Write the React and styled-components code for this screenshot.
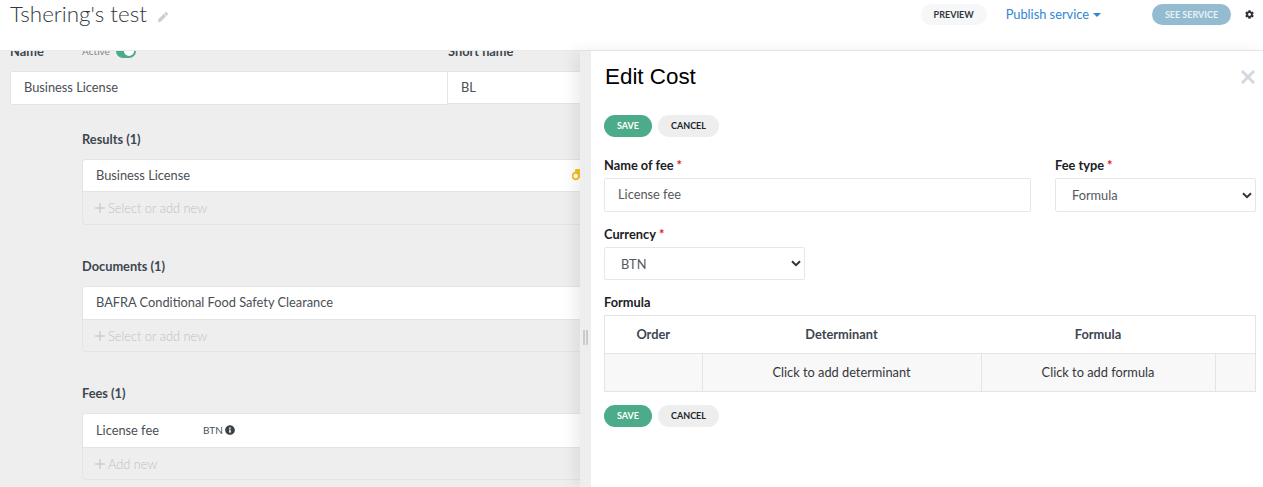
import React from "react";
import styled, { createGlobalStyle } from "styled-components";
import { FaCog, FaInfoCircle, FaPen } from "react-icons/fa";

const chevron =
  "url(\"data:image/svg+xml,%3Csvg xmlns='http://www.w3.org/2000/svg' width='10' height='7' viewBox='0 0 10 7'%3E%3Cpath d='M1 1.2 5 5.2l4-4' fill='none' stroke='%23333' stroke-width='2'/%3E%3C/svg%3E\")";

const GlobalStyle = createGlobalStyle`
  html, body {
    margin: 0;
    height: 100%;
    overflow: hidden;
  }
  body {
    font-family: "Lato", "Liberation Sans", sans-serif;
    background: #eeeeee;
    color: #3d4650;
  }
  * {
    box-sizing: border-box;
  }
`;

const Page = styled.div`
  position: relative;
  width: 1263px;
  height: 487px;
  overflow: hidden;
`;

const Header = styled.header`
  height: 51px;
  background: #fff;
  border-bottom: 1px solid #e9e9e9;
  display: flex;
  align-items: flex-start;
  padding: 4px 0 0 10px;
`;

const Title = styled.h1`
  margin: -5px 0 0;
  font-size: 22.4px;
  line-height: 30px;
  font-weight: 300;
  color: #32383f;
`;

const EditIcon = styled(FaPen)`
  color: #cfcfcf;
  font-size: 10px;
  margin: 8px 0 0 11px;
`;

const HeaderActions = styled.div`
  margin-left: auto;
  display: flex;
  align-items: center;
  height: 21px;
  padding-right: 9px;
`;

const Pill = styled.button`
  height: 21px;
  border: 0;
  border-radius: 11px;
  padding: 0;
  width: ${(p) => p.$width}px;
  background: ${(p) => p.$bg};
  color: ${(p) => p.$color};
  font: 700 9px "Lato", sans-serif;
  text-transform: uppercase;
`;

const PublishLink = styled.div`
  margin: 0 51px 0 19px;
  display: flex;
  align-items: center;
  gap: 4px;
  color: #2f86d6;
  font-size: 12.8px;
  line-height: 21px;
`;

const Caret = styled.span`
  width: 0;
  height: 0;
  border-left: 4px solid transparent;
  border-right: 4px solid transparent;
  border-top: 4px solid #2f86d6;
`;

const GearIcon = styled(FaCog)`
  color: #2f3338;
  font-size: 9px;
  margin-left: 14px;
`;

const Main = styled.main`
  height: 436px;
  overflow: hidden;
  padding: 0 10px;
`;

const NameLabels = styled.div`
  display: flex;
  align-items: center;
  height: 20px;
  margin-top: -10px;
`;

const FieldLabel = styled.div`
  font-size: 12.8px;
  font-weight: 700;
  color: #3d4650;
  width: ${(p) => (p.$width ? `${p.$width}px` : "auto")};
`;

const ActiveLabel = styled.span`
  font-size: 10px;
  color: #7d858c;
  width: 34px;
`;

const Toggle = styled.span`
  display: block;
  width: 20px;
  height: 14px;
  margin-right: 312px;
  border-radius: 7px;
  background: #4cab88;
  position: relative;
  &::after {
    content: "";
    position: absolute;
    right: 2px;
    top: 2px;
    width: 10px;
    height: 10px;
    border-radius: 50%;
    background: #fff;
  }
`;

const NameRow = styled.div`
  display: flex;
  margin-top: 10px;
`;

const NameCell = styled.div`
  background: #fff;
  border: 1px solid #e2e4e8;
  border-radius: 2px 0 0 2px;
  width: 438px;
  height: 34px;
  padding-left: 13px;
  font-size: 12.8px;
  line-height: 31px;
  color: #4a4f55;
`;

const ShortCell = styled(NameCell)`
  flex: 1;
  width: auto;
  height: 33px;
  border-left: 0;
  border-radius: 0;
`;

const Section = styled.section`
  margin: 0 0 0 72px;
  padding-top: ${(p) => p.$top}px;
`;

const SectionTitle = styled.div`
  font-size: 12.8px;
  font-weight: 700;
  line-height: 16px;
  color: #3d4650;
  margin-bottom: 12px;
`;

const List = styled.div`
  border: 1px solid #e2e4e8;
  border-radius: 4px;
  overflow: hidden;
`;

const ListItem = styled.div`
  display: flex;
  align-items: center;
  height: ${(p) => p.$height || 32}px;
  padding: 0 0 2px 13px;
  background: #fff;
  border-bottom: 1px solid #e2e4e8;
  font-size: 12.8px;
  color: #4a4f55;
`;

const ItemName = styled.span`
  width: 107px;
`;

const Currency = styled.span`
  font-size: 10px;
  color: #4a4f55;
  margin-right: 2px;
`;

const InfoIcon = styled(FaInfoCircle)`
  font-size: 10px;
  color: #3c4147;
`;

const BadgeIcon = styled.svg`
  flex: none;
  margin-left: 369px;
  width: 14px;
  height: 12px;
`;

const AddRow = styled.div`
  display: flex;
  align-items: center;
  gap: 3px;
  height: ${(p) => p.$height || 32}px;
  padding-left: 12px;
  font-size: 12.8px;
  font-weight: 300;
  color: #bfc1c3;
`;

const PlusIcon = styled.svg`
  width: 10px;
  height: 10px;
  stroke: #bfc1c3;
  stroke-width: 1;
`;

const Drawer = styled.aside`
  position: absolute;
  top: 51px;
  left: 580px;
  right: 0;
  bottom: 0;
  display: flex;
  box-shadow: -6px 0 14px rgba(0, 0, 0, 0.07);
`;

const Handle = styled.div`
  width: 11px;
  background: #eeeeee;
  display: flex;
  align-items: center;
  justify-content: center;
  gap: 1px;
  span {
    display: block;
    width: 2px;
    height: 15px;
    margin-top: 137px;
    background: #c9cbcd;
  }
`;

const Panel = styled.div`
  flex: 1;
  background: #fff;
  position: relative;
  padding: 0 7px 0 13px;
`;

const PanelTitle = styled.h2`
  margin: 11px 0 0 1px;
  font: 400 22.4px/30px "Liberation Sans", Arial, sans-serif;
  color: #000;
`;

const CloseButton = styled.svg`
  position: absolute;
  top: 19px;
  right: 8px;
  width: 14px;
  height: 14px;
  stroke: #d3d9de;
  stroke-width: 3;
`;

const ButtonRow = styled.div`
  display: flex;
  gap: 6px;
  margin-top: ${(p) => p.$top}px;
`;

const ActionButton = styled.button`
  height: 22px;
  border: 0;
  border-radius: 11px;
  padding: 0 0 1px;
  width: ${(p) => (p.$primary ? 48 : 61)}px;
  background: ${(p) => (p.$primary ? "#4cab88" : "#eeeeee")};
  color: ${(p) => (p.$primary ? "#fff" : "#22262a")};
  font: 700 9px "Lato", sans-serif;
  text-transform: uppercase;
`;

const FormRow = styled.div`
  display: flex;
  gap: 24px;
  margin-top: ${(p) => p.$top}px;
`;

const FormField = styled.div`
  width: ${(p) => p.$width}px;
  flex: none;
`;

const FormLabel = styled.div`
  font-size: 12.8px;
  font-weight: 700;
  line-height: 16px;
  color: #1c2024;
  margin-bottom: 5px;
  em {
    font-style: normal;
    color: #e01b1b;
    margin-left: 3px;
  }
`;

const TextInput = styled.input`
  display: block;
  width: 100%;
  height: 34px;
  padding: 0 13px 2px;
  background: #fff;
  border: 1px solid #e6e7ea;
  border-radius: 2px;
  font: 400 12.8px "Lato", sans-serif;
  color: #55595e;
  outline: none;
`;

const Select = styled.select`
  display: block;
  width: 100%;
  height: ${(p) => p.$height}px;
  padding: 0 16px;
  appearance: none;
  background: #fff ${chevron} no-repeat right 3px center;
  border: 1px solid #e6e7ea;
  border-radius: 2px;
  font: 400 12.8px "Lato", sans-serif;
  color: #55595e;
`;

const Table = styled.table`
  width: 651px;
  border-collapse: collapse;
  table-layout: fixed;
  font-size: 12.8px;
  th,
  td {
    height: 38px;
    padding: 0 1px 2px 0;
    text-align: center;
    border-top: 1px solid #e2e4e8;
    border-bottom: 1px solid #e2e4e8;
  }
  th {
    font-weight: 700;
    color: #3d4650;
  }
  td {
    background: #f8f8f8;
    color: #33373b;
    border-right: 1px solid #e2e4e8;
    border-left: 1px solid #e2e4e8;
  }
  th:first-child {
    border-left: 1px solid #e2e4e8;
  }
  th:last-child {
    border-right: 1px solid #e2e4e8;
  }
`;

const Buttons = ({ top }) => (
  <ButtonRow $top={top}>
    <ActionButton $primary>Save</ActionButton>
    <ActionButton>Cancel</ActionButton>
  </ButtonRow>
);

const AddNew = ({ height, children }) => (
  <AddRow $height={height}>
    <PlusIcon viewBox="0 0 10 10">
      <path d="M5 0v10M0 5h10" />
    </PlusIcon>
    {children}
  </AddRow>
);

const App = () => {
  return (
    <Page>
      <GlobalStyle />
      <Header>
        <Title>Tshering's test</Title>
        <EditIcon />
        <HeaderActions>
          <Pill $width={66} $bg="#f6f7f9" $color="#33373b">
            Preview
          </Pill>
          <PublishLink>
            Publish service
            <Caret />
          </PublishLink>
          <Pill $width={79} $bg="#94bcd0" $color="#e8f1f5">
            See service
          </Pill>
          <GearIcon />
        </HeaderActions>
      </Header>
      <Main>
        <NameLabels>
          <FieldLabel $width={72}>Name</FieldLabel>
          <ActiveLabel>Active</ActiveLabel>
          <Toggle />
          <FieldLabel>Short name</FieldLabel>
        </NameLabels>
        <NameRow>
          <NameCell>Business License</NameCell>
          <ShortCell>BL</ShortCell>
        </NameRow>
        <Section $top={26}>
          <SectionTitle>Results (1)</SectionTitle>
          <List>
            <ListItem>
              <ItemName>Business License</ItemName>
              <BadgeIcon viewBox="0 0 14 12">
                <rect x="3" y="0" width="11" height="9" rx="1" fill="#f5c21f" />
                <circle cx="3.7" cy="7" r="3.2" fill="#fff" stroke="#f5c21f" strokeWidth="2" />
              </BadgeIcon>
            </ListItem>
            <AddNew>Select or add new</AddNew>
          </List>
        </Section>
        <Section $top={33}>
          <SectionTitle>Documents (1)</SectionTitle>
          <List>
            <ListItem $height={33}>BAFRA Conditional Food Safety Clearance</ListItem>
            <AddNew height={31}>Select or add new</AddNew>
          </List>
        </Section>
        <Section $top={33}>
          <SectionTitle>Fees (1)</SectionTitle>
          <List>
            <ListItem $height={34}>
              <ItemName>License fee</ItemName>
              <Currency>BTN</Currency>
              <InfoIcon />
            </ListItem>
            <AddNew height={31}>Add new</AddNew>
          </List>
        </Section>
      </Main>
      <Drawer>
        <Handle>
          <span />
          <span />
        </Handle>
        <Panel>
          <PanelTitle>Edit Cost</PanelTitle>
          <CloseButton viewBox="0 0 14 14">
            <path d="M1 1l12 12M13 1 1 13" />
          </CloseButton>
          <Buttons top={23} />
          <FormRow $top={20}>
            <FormField $width={427}>
              <FormLabel>
                Name of fee<em>*</em>
              </FormLabel>
              <TextInput defaultValue="License fee" />
            </FormField>
            <FormField $width={201}>
              <FormLabel>
                Fee type<em>*</em>
              </FormLabel>
              <Select $height={34} defaultValue="Formula">
                <option>Formula</option>
              </Select>
            </FormField>
          </FormRow>
          <FormRow $top={14}>
            <FormField $width={201}>
              <FormLabel>
                Currency<em>*</em>
              </FormLabel>
              <Select $height={33} defaultValue="BTN">
                <option>BTN</option>
              </Select>
            </FormField>
          </FormRow>
          <FormRow $top={14}>
            <FormField $width={651}>
              <FormLabel>Formula</FormLabel>
              <Table>
                <colgroup>
                  <col width="98" />
                  <col width="279" />
                  <col width="234" />
                  <col width="40" />
                </colgroup>
                <thead>
                  <tr>
                    <th>Order</th>
                    <th>Determinant</th>
                    <th>Formula</th>
                    <th />
                  </tr>
                </thead>
                <tbody>
                  <tr>
                    <td />
                    <td>Click to add determinant</td>
                    <td>Click to add formula</td>
                    <td />
                  </tr>
                </tbody>
              </Table>
            </FormField>
          </FormRow>
          <Buttons top={13} />
        </Panel>
      </Drawer>
    </Page>
  );
};

export default App;
